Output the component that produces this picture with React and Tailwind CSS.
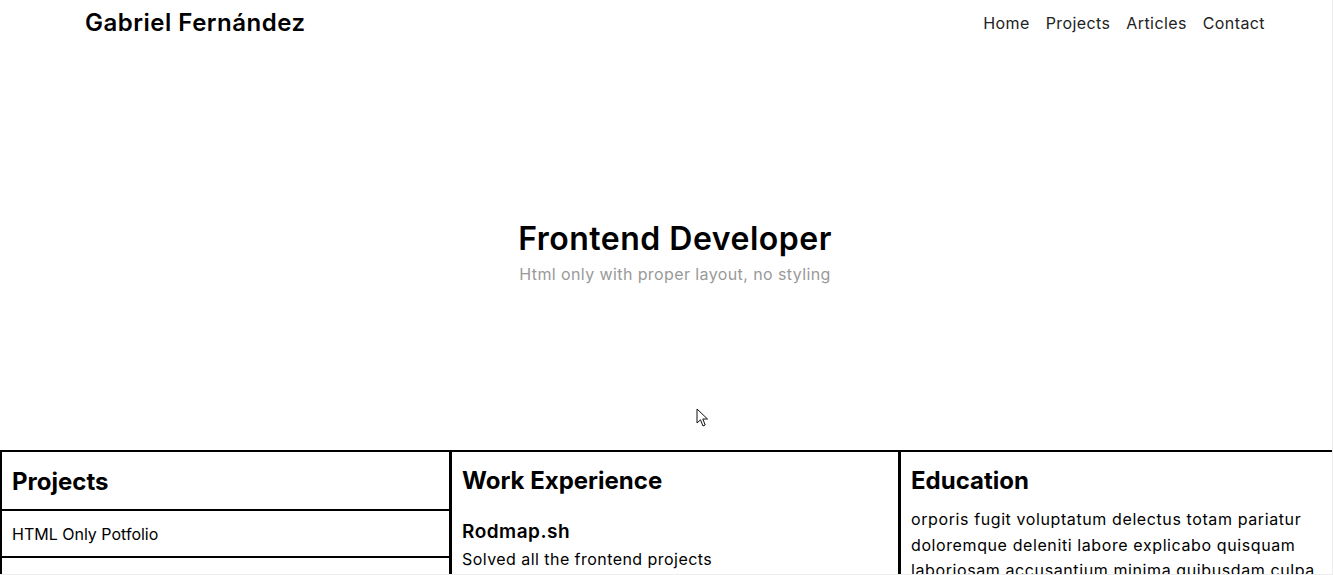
const font = { fontFamily: 'Inter, "Noto Sans", sans-serif' };

function Cursor() {
  return (
    <svg
      className="absolute left-[696px] top-[408px]"
      width="13"
      height="20"
      viewBox="0 0 13 20"
    >
      <path
        d="M1 1 L1 15 L4.5 11.8 L7 18 L9.2 17 L6.8 11 L11.5 11 Z"
        fill="#fff"
        stroke="#111"
        strokeWidth="1"
        strokeLinejoin="round"
      />
    </svg>
  );
}

export default function App() {
  return (
    <div
      className="relative w-[1333px] h-[575px] overflow-hidden bg-white text-black border-r border-b border-[#ececec]"
      style={font}
    >
      <header className="h-[45px] flex items-center justify-between pl-[85px] pr-[67px]">
        <h1 className="text-[24px] font-semibold tracking-[0.5px] text-black">Gabriel Fernández</h1>
        <nav className="flex items-center gap-[16px] text-[16px] tracking-[0.4px] text-[#222]">
          <a>Home</a>
          <a>Projects</a>
          <a>Articles</a>
          <a>Contact</a>
        </nav>
      </header>

      <section className="h-[405px] flex flex-col items-center justify-center pt-[10px] pl-[18px]">
        <h2 className="text-[32px] leading-[40px] font-semibold tracking-[0.5px]">Frontend Developer</h2>
        <p className="text-[16px] leading-[24px] mt-[3px] tracking-[0.4px] text-[#999]">
          Html only with proper layout, no styling
        </p>
      </section>

      <div className="flex w-[1360px] border-t-2 border-black">
        <div className="w-[449px] shrink-0 border-l-2 border-black">
          <h3 className="h-[59px] flex items-center pt-[2px] px-[10px] text-[24px] font-bold border-b-2 border-black">
            Projects
          </h3>
          <div className="h-[47px] flex items-center pt-[1px] px-[10px] text-[16px] border-b-2 border-black">
            HTML Only Potfolio
          </div>
          <div className="h-[40px]" />
        </div>

        <div className="w-[449px] shrink-0 border-l-[3px] border-black px-[10px]">
          <h3 className="h-[56px] flex items-center pt-[2px] text-[24px] font-bold">Work Experience</h3>
          <h4 className="mt-[11px] text-[19px] leading-[26px] font-semibold tracking-[0.5px]">Rodmap.sh</h4>
          <p className="mt-[1px] text-[16px] leading-[26px] tracking-[0.45px]">Solved all the frontend projects</p>
        </div>

        <div className="w-[460px] shrink-0 border-l-[3px] border-black px-[10px]">
          <h3 className="h-[56px] flex items-center pt-[1px] text-[24px] font-bold">Education</h3>
          <p className="-mt-[1px] text-[16px] leading-[25.5px] tracking-[0.6px] whitespace-nowrap">
            orporis fugit voluptatum delectus totam pariatur
            <br />
            doloremque deleniti labore explicabo quisquam
            <br />
            laboriosam accusantium minima quibusdam culpa
          </p>
        </div>
      </div>

      <Cursor />
    </div>
  );
}
